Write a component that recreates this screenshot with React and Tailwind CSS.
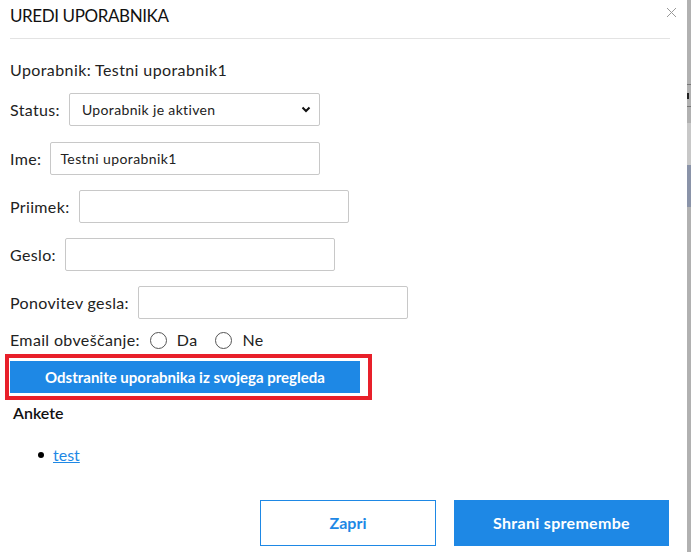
import React from "react";

const font = { fontFamily: '"Source Sans Pro", Lato, "Noto Sans", sans-serif' };

function Field({ label, value }) {
  return (
    <div className="flex items-center h-[33px]">
      <span className="text-[16px] tracking-[0.35px] text-[#222]">{label}</span>
      <div className="ml-[9px] w-[270px] h-[33px] border border-[#c8c8c8] rounded-[2px] flex items-center px-[9px] text-[14px] tracking-[0.4px] text-[#222]">
        {value}
      </div>
    </div>
  );
}

function Radio({ label }) {
  return (
    <span className="flex items-center">
      <span className="w-[17px] h-[17px] rounded-full border-[1.5px] border-[#555] bg-white" />
      <span className="ml-[10px] text-[16px] tracking-[0.35px] text-[#222]">{label}</span>
    </span>
  );
}

export default function App() {
  return (
    <div className="flex w-[691px] h-[552px] overflow-hidden bg-white" style={font}>
      <div className="w-[687px] h-full bg-white flex flex-col">
        <div className="relative h-[39px] mx-[10px] mr-[17px] border-b border-[#e3e3e3]">
          <div className="pt-[5px] text-[17px] leading-[22px] text-[#111] tracking-[-0.4px]">UREDI UPORABNIKA</div>
          <svg className="absolute right-[-7px] top-[7px]" width="11" height="11" viewBox="0 0 11 11">
            <path d="M1 1 L10 10 M10 1 L1 10" stroke="#999" strokeWidth="1" fill="none" />
          </svg>
        </div>
        <div className="pl-[10px] flex flex-col">
          <div className="mt-[19px] h-[24px] leading-[24px] text-[16px] tracking-[0.4px] text-[#222]">Uporabnik: Testni uporabnik1</div>
          <div className="mt-[11px] flex items-center h-[33px]">
            <span className="text-[16px] tracking-[0.35px] text-[#222]">Status:</span>
            <div className="ml-[9px] w-[251px] h-[33px] border border-[#c8c8c8] rounded-[2px] flex items-center justify-between pl-[12px] pr-[8px] text-[14px] tracking-[0.35px] text-[#222]">
              <span>Uporabnik je aktiven</span>
              <svg width="10" height="7" viewBox="0 0 10 7">
                <path d="M1.5 1.5 L5 5 L8.5 1.5" stroke="#111" strokeWidth="2" fill="none" />
              </svg>
            </div>
          </div>
          <div className="mt-[16px]"><Field label="Ime:" value="Testni uporabnik1" /></div>
          <div className="mt-[15px]"><Field label="Priimek:" value="" /></div>
          <div className="mt-[15px]"><Field label="Geslo:" value="" /></div>
          <div className="mt-[15px]"><Field label="Ponovitev gesla:" value="" /></div>
          <div className="mt-[9px] h-[24px] flex items-center gap-[10px]">
            <span className="text-[16px] tracking-[0.35px] text-[#222]">Email obveščanje:</span>
            <Radio label="Da" />
            <span className="ml-[8px]"><Radio label="Ne" /></span>
          </div>
        </div>
        <div className="ml-[5px] mt-[2px] w-[367px] h-[46px] border-[4px] border-[#e8202a] pt-[3px] pb-[3px] pl-[1px] pr-[8px]">
          <div className="h-full bg-[#1e88e5] flex items-center justify-center text-white text-[15px] font-bold">
            Odstranite uporabnika iz svojega pregleda
          </div>
        </div>
        <div className="ml-[13px] mt-[3px] h-[20px] leading-[20px] text-[16px] font-semibold text-[#111]">Ankete</div>
        <ul className="mt-[22px] ml-[38px] flex items-center h-[20px]">
          <li className="flex items-center">
            <span className="w-[6px] h-[6px] rounded-full bg-black" />
            <a className="ml-[9px] text-[16px] text-[#1e88e5] underline">test</a>
          </li>
        </ul>
        <div className="mt-[35px] flex ml-[260px]">
          <div className="w-[176px] h-[46px] border border-[#1e88e5] flex items-center justify-center text-[#1e88e5] text-[16px] font-bold">Zapri</div>
          <div className="ml-[18px] w-[215px] h-[46px] bg-[#1e88e5] flex items-center justify-center text-white text-[16px] tracking-[0.3px] font-bold">Shrani spremembe</div>
        </div>
      </div>
      <div className="w-[4px] h-full bg-[#b1b1b1] flex flex-col">
        <div className="mt-[84px] h-[1px] bg-[#777]" />
        <div className="mt-[8px] h-[6px] w-[2px] bg-[#222]" />
        <div className="mt-[7px] h-[1px] bg-[#777]" />
        <div className="mt-[16px] h-[42px] bg-[#c8c8c8]" />
        <div className="h-[42px] bg-[#8a93a8]" />
      </div>
    </div>
  );
}
